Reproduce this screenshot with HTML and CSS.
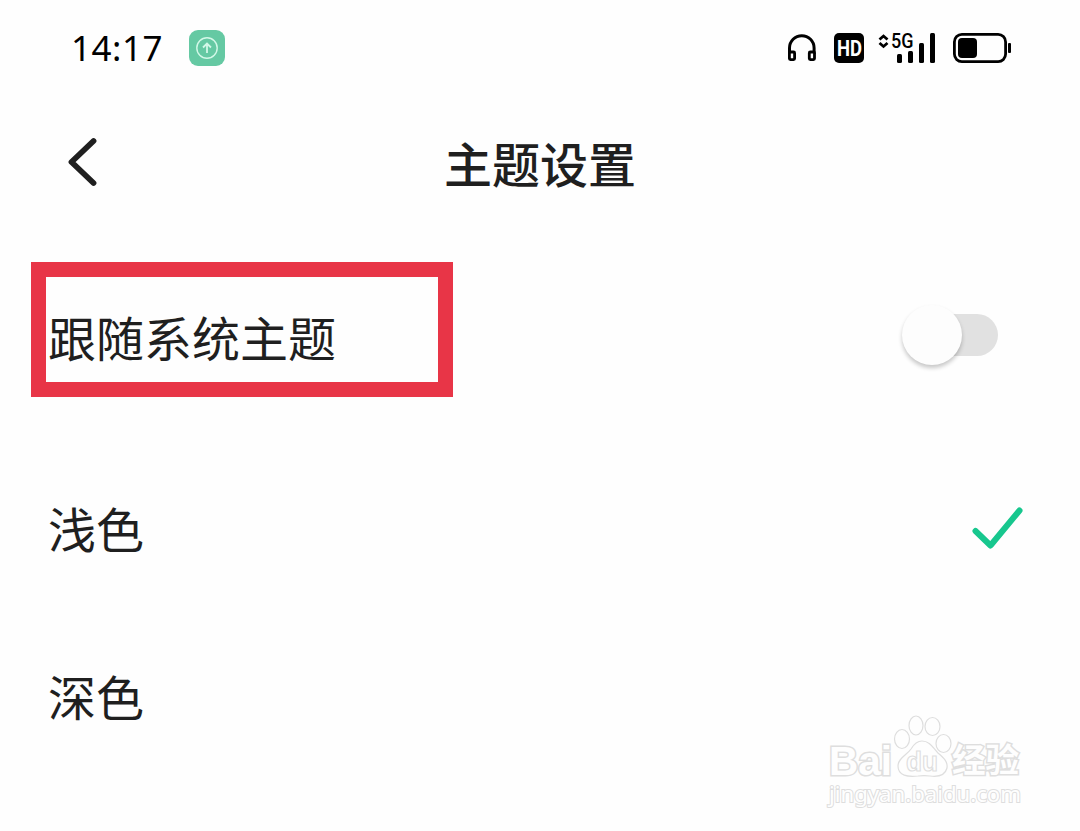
FILE: index.html
```
<!DOCTYPE html>
<html lang="zh-CN">
<head>
  <meta charset="utf-8">
  <title>主题设置</title>
  <link rel="stylesheet" href="styles.css">
</head>
<body>
  <div class="screen">
    <div class="status-bar">
      <span class="time">14:17</span>
      <svg class="app-icon" width="36" height="36" viewBox="0 0 36 36">
        <rect width="36" height="36" rx="9" fill="#65c9a3"/>
        <g fill="none" stroke="#d3f8e8" stroke-width="1.4">
          <circle cx="18" cy="18" r="10.2"/>
          <path d="M18 23v-9M14 17.5l4-4 4 4" stroke-width="1.8"/>
        </g>
      </svg>
      <svg class="status-icons" width="230" height="36" viewBox="784 30 230 36">
        <!-- headphones -->
        <path d="M789.5 54v-6a12.3 12.3 0 0 1 24.6 0v6" fill="none" stroke="#000" stroke-width="3"/>
        <rect x="789.4" y="52" width="5.2" height="7.6" rx="1" fill="#fff" stroke="#000" stroke-width="2.8"/>
        <rect x="809.3" y="52" width="5.2" height="7.6" rx="1" fill="#fff" stroke="#000" stroke-width="2.8"/>
        <!-- HD badge -->
        <rect x="834" y="33" width="30" height="30" rx="5" fill="#000"/>
        <text class="hd" x="837" y="56" textLength="25" lengthAdjust="spacingAndGlyphs">HD</text>
        <!-- signal -->
        <path d="M879.5 39.500l4-3.500 4 3.500M879.5 43l4 3.500 4-3.500" fill="none" stroke="#000" stroke-width="2.800"/>
        <text class="net" x="891" y="47.500" textLength="22.5" lengthAdjust="spacingAndGlyphs">5G</text>
        <rect x="897" y="54" width="5" height="9" rx="1.5"/>
        <rect x="908" y="51" width="5" height="12" rx="1.5"/>
        <rect x="919" y="43" width="5" height="20" rx="1.5"/>
        <rect x="930" y="33" width="5" height="30" rx="1.5"/>
        <!-- battery -->
        <rect x="954.4" y="34.4" width="51.2" height="27.2" rx="7.5" fill="none" stroke="#000" stroke-width="2.8"/>
        <rect x="958" y="38" width="19" height="20" rx="4"/>
        <rect x="1008" y="43" width="3" height="10" rx="1"/>
      </svg>
    </div>

    <div class="header">
      <svg class="back" width="40" height="56" viewBox="0 0 40 56">
        <path d="M33.5 7L11.5 28l22 21" fill="none" stroke="#1f1f1f" stroke-width="5.8" stroke-linecap="round" stroke-linejoin="round"/>
      </svg>
      <h1 class="title">主题设置</h1>
    </div>

    <div class="row row-follow">
      <span>跟随系统主题</span>
      <div class="switch"><div class="knob"></div></div>
      <div class="mark"></div>
    </div>
    <div class="row">
      <span>浅色</span>
      <svg class="check" width="56" height="48" viewBox="0 0 56 48">
        <path d="M7.5 28L22.5 42.500 51.5 7.500" fill="none" stroke="#17c78e" stroke-width="6" stroke-linecap="round" stroke-linejoin="round"/>
      </svg>
    </div>
    <div class="row">
      <span>深色</span>
    </div>

    <svg class="watermark" width="220" height="110" viewBox="0 0 220 110">
      <g class="wm-shape">
        <ellipse cx="87" cy="34" rx="7.5" ry="9.5"/>
        <ellipse cx="101" cy="20.500" rx="7" ry="9.500"/>
        <ellipse cx="117.500" cy="21.500" rx="7.500" ry="9"/>
        <ellipse cx="128.500" cy="38.500" rx="7.500" ry="9"/>
        <path d="M107 36c8 0 11 7 16 12 6 5 10 9 9 15-2 8-9 9-17 8-4-.5-8-.5-12 0-10 1-20 0-20-10 0-8 9-11 13-17 3-5 6-8 11-8z"/>
      </g>
      <text class="wm-logo" x="14" y="70" textLength="63" lengthAdjust="spacingAndGlyphs">Bai</text>
      <text class="wm-du" x="91" y="66" textLength="32" lengthAdjust="spacingAndGlyphs">du</text>
      <text class="wm-cn" x="137" y="67" textLength="67" lengthAdjust="spacingAndGlyphs">经验</text>
      <text class="wm-url" x="14" y="97" textLength="192" lengthAdjust="spacingAndGlyphs">jingyan.baidu.com</text>
    </svg>
  </div>
</body>
</html>
```
FILE: styles.css
```
body {
  margin: 0;
  background: #fefefe;
  color: #1f1f1f;
  font-family: "Noto Sans CJK SC", sans-serif;
}
.screen {
  position: relative;
  height: 831px;
  overflow: hidden;
}
.status-bar {
  display: flex;
  align-items: center;
  height: 96px;
  padding: 0 66px 0 71px;
}
.time {
  width: 118px;
  font-family: "Noto Sans", sans-serif;
  font-size: 35px;
  line-height: 48px;
  letter-spacing: 0.5px;
  color: #000;
}
.status-icons {
  margin-left: auto;
}
.hd {
  font: bold 22px "Roboto", sans-serif;
  fill: #fff;
}
.net {
  font: 500 20px "Roboto", sans-serif;
}
.header {
  display: grid;
  grid-template-columns: 80px 1fr 80px;
  align-items: center;
  height: 132px;
  padding: 0 60px;
}
.title {
  margin: 0;
  font-size: 48px;
  font-weight: 500;
  line-height: 64px;
  text-align: center;
}
.row {
  display: flex;
  align-items: center;
  justify-content: space-between;
  height: 168px;
  padding: 0 56px 0 48px;
  font-size: 48px;
  line-height: 64px;
}
.row-follow {
  position: relative;
  height: 215px;
  padding-right: 82px;
}
.switch {
  display: flex;
  align-items: center;
  width: 90px;
  height: 42px;
  margin-top: -1px;
  border-radius: 21px;
  background: #e1e1e1;
}
.knob {
  width: 60px;
  height: 60px;
  margin-left: -6px;
  border-radius: 50%;
  background: #fdfdfd;
  box-shadow: 0 3px 4px rgba(0, 0, 0, 0.22);
}
/* red frame drawn over the row */
.mark {
  position: absolute;
  left: 31px;
  top: 34px;
  width: 392px;
  height: 105px;
  border: 15px solid #e83547;
}
.watermark {
  position: absolute;
  left: 815px;
  top: 705px;
}
.watermark text,
.wm-shape {
  fill: #fefefe;
  stroke: #dedede;
  stroke-width: 1.2;
}
.watermark .wm-logo {
  font: bold 40px "Liberation Sans", sans-serif;
  stroke-width: 3;
  paint-order: stroke;
}
.wm-du {
  font: bold 28px "Liberation Sans", sans-serif;
}
.watermark .wm-cn {
  font: bold 33px "Noto Sans CJK SC", sans-serif;
  stroke-width: 3;
  paint-order: stroke;
}
.watermark .wm-url {
  font: 21px "Noto Sans", sans-serif;
  stroke-width: 2;
  paint-order: stroke;
}
```
